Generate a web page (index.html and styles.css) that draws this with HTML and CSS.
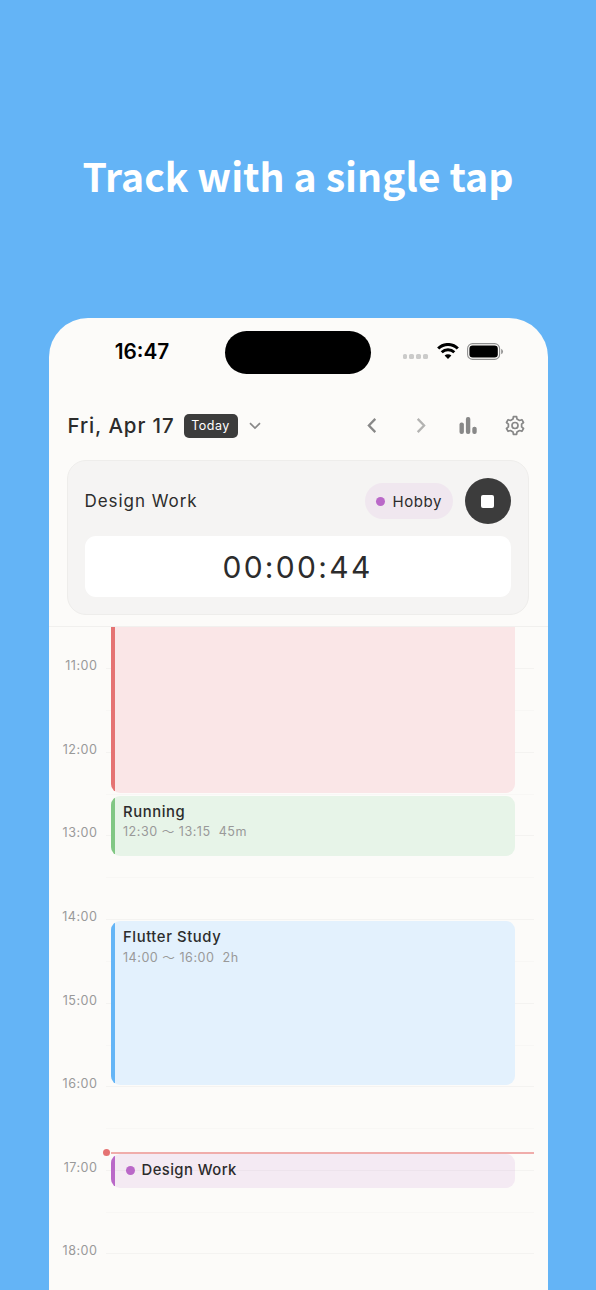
FILE: index.html
```html
<!DOCTYPE html>
<html lang="en">
<head>
  <meta charset="UTF-8">
  <title>Time Tracker</title>
  <meta name="viewport" content="width=device-width, initial-scale=1.0">
  <link rel="stylesheet" href="styles.css">
</head>
<body>
  <h1>Track with a single tap</h1>

  <div class="phone">
    <div class="status-bar">
      <div class="clock">16:47</div>
      <div class="island"></div>
      <div class="status-icons">
        <div class="signal"><i></i><i></i><i></i><i></i></div>
        <svg class="wifi" width="22" height="17" viewBox="0 0 22 17">
          <path d="M1.2 5.5 A14 14 0 0 1 20.8 5.5" fill="none" stroke="#000" stroke-width="3.1"/>
          <path d="M4.7 9.3 A9 9 0 0 1 17.3 9.3" fill="none" stroke="#000" stroke-width="2.9"/>
          <path d="M7.6 12.6 A4.9 4.9 0 0 1 14.4 12.6 L11 16 Z"/>
        </svg>
        <svg class="battery" width="37" height="17" viewBox="0 0 37 17">
          <rect x="0.6" y="0.6" width="32" height="15.8" rx="5" fill="none" stroke="#8f8f8f" stroke-width="1.1"/>
          <rect x="2.4" y="2.4" width="28.4" height="12.2" rx="3.3"/>
          <path d="M34.2 5.7 Q36 6.6 36 8.5 Q36 10.4 34.2 11.3 Z" fill="#8f8f8f"/>
        </svg>
      </div>
    </div>

    <div class="toolbar">
      <span class="date">Fri, Apr 17</span>
      <span class="today">Today</span>
      <svg class="chevron" width="12" height="8" viewBox="0 0 12 8"><path d="M1 1.2 L6 6 L11 1.2"/></svg>
      <div class="actions">
        <svg width="24" height="24" viewBox="0 0 24 24"><path class="arrow" d="M15.3 4.9 L8.9 11.5 L15.3 18.1"/></svg>
        <svg width="24" height="24" viewBox="0 0 24 24"><path class="arrow off" d="M9.7 4.9 L16.1 11.5 L9.7 18.1"/></svg>
        <svg width="24" height="24" viewBox="0 0 24 24" fill="#888">
          <rect x="4.5" y="8.4" width="4.4" height="11.6" rx="2"/>
          <rect x="10.9" y="3.1" width="4.4" height="16.9" rx="2"/>
          <rect x="17.3" y="12.7" width="4.4" height="7.3" rx="2"/>
        </svg>
        <svg width="24" height="24" viewBox="0 0 24 24">
          <g transform="translate(0 -0.5)">
            <path class="gear" d="M10 5.6 L10.4 3.1 H13.6 L14 5.6 L16.5 7 L18.9 6.2 L20.5 9 L18.6 10.6 V13.4 L20.5 15 L18.9 17.8 L16.5 17 L14 18.4 L13.6 20.9 H10.4 L10 18.4 L7.5 17 L5.1 17.8 L3.5 15 L5.4 13.4 V10.6 L3.5 9 L5.1 6.2 L7.5 7 Z"/>
            <circle class="gear" cx="12" cy="12" r="3"/>
          </g>
        </svg>
      </div>
    </div>

    <div class="tracker">
      <div class="tracker-row">
        <span class="task">Design Work</span>
        <span class="tag"><i class="dot"></i>Hobby</span>
        <button class="stop" aria-label="Stop"><i></i></button>
      </div>
      <div class="timer">00:00:44</div>
    </div>

    <div class="timeline">
      <div class="hour"><span>11:00</span></div>
      <div class="hour"><span>12:00</span></div>
      <div class="hour"><span>13:00</span></div>
      <div class="hour"><span>14:00</span></div>
      <div class="hour"><span>15:00</span></div>
      <div class="hour"><span>16:00</span></div>
      <div class="hour"><span>17:00</span></div>
      <div class="hour"><span>18:00</span></div>

      <div class="event red"></div>
      <div class="event green">
        <div class="name">Running</div>
        <div class="time">12:30 <b>〜</b> 13:15&nbsp; 45m</div>
      </div>
      <div class="event blue">
        <div class="name">Flutter Study</div>
        <div class="time">14:00 <b>〜</b> 16:00&nbsp; 2h</div>
      </div>
      <div class="event purple">
        <div class="name"><i class="dot"></i>Design Work</div>
      </div>
      <div class="now"></div>
    </div>
  </div>
</body>
</html>
```

FILE: styles.css
```css
* {
  box-sizing: border-box;
}

body {
  margin: 0;
  height: 1290px;
  overflow: hidden;
  background: #64b4f6;
  font-family: Inter, "Noto Sans CJK JP", sans-serif;
  color: #2c2c2c;
}

h1 {
  margin: 0;
  padding-top: 145px;
  height: 318px;
  font-family: "Noto Sans CJK JP", sans-serif;
  font-size: 39.2px;
  line-height: 60px;
  font-weight: 700;
  text-align: center;
  color: #fff;
  white-space: nowrap;
}

.phone {
  display: flex;
  flex-direction: column;
  width: 499px;
  height: 972px;
  margin: 0 auto;
  background: #fcfbf9;
  border-radius: 39px 39px 0 0;
  overflow: hidden;
}

.status-bar {
  display: grid;
  grid-template-columns: 176px 146px 1fr;
  padding-top: 13px;
  height: 84px;
}

.clock {
  padding: 7px 0 0 11px;
  font-size: 20.8px;
  line-height: 27px;
  font-weight: 600;
  text-align: center;
  color: #000;
}

.island {
  height: 43px;
  border-radius: 22px;
  background: #000;
}

.status-icons {
  display: flex;
  align-items: center;
  height: 40px;
  padding-left: 32px;
}

.signal {
  display: flex;
  gap: 2.6px;
  padding-top: 11px;
}

.signal i {
  width: 4.4px;
  height: 4.4px;
  border-radius: 1.6px;
  background: #cbcbca;
}

.wifi {
  margin-left: 9px;
}

.battery {
  margin-left: 8.5px;
}

.toolbar {
  display: flex;
  align-items: center;
  height: 47px;
  padding: 0 21px 0 19px;
}

.date {
  width: 116px;
  font-size: 20.5px;
  font-weight: 500;
  letter-spacing: 0.9px;
  white-space: nowrap;
}

.today {
  width: 54px;
  height: 24px;
  border-radius: 5px;
  background: #3c3c3c;
  color: #fff;
  font-size: 12.5px;
  line-height: 24px;
  letter-spacing: 0.5px;
  text-align: center;
}

.chevron {
  margin-left: 11px;
}

.chevron path {
  fill: none;
  stroke: #888;
  stroke-width: 1.7;
}

.actions {
  display: flex;
  gap: 23.5px;
  margin-left: auto;
}

.arrow {
  fill: none;
  stroke: #888;
  stroke-width: 2.3;
}

.arrow.off {
  stroke: #b3b3b2;
}

.gear {
  fill: none;
  stroke: #888;
  stroke-width: 1.7;
  stroke-linejoin: round;
}

.tracker {
  width: 462px;
  height: 155px;
  margin: 11px 0 0 18px;
  padding: 17px 17px 0;
  border: 1px solid #eeedeb;
  border-radius: 19px;
  background: #f5f4f3;
}

.tracker-row {
  display: flex;
  align-items: center;
  height: 46px;
}

.task {
  flex: 1;
  font-size: 17px;
  letter-spacing: 0.95px;
}

.dot {
  width: 9px;
  height: 9px;
  border-radius: 50%;
  background: #ba68c8;
}

.tag {
  display: flex;
  align-items: center;
  gap: 7.5px;
  width: 88px;
  height: 36px;
  padding-left: 11.5px;
  border-radius: 18px;
  background: #f0e7ef;
  font-size: 15px;
  letter-spacing: 0.55px;
}

.stop {
  display: flex;
  align-items: center;
  justify-content: center;
  width: 46px;
  height: 46px;
  margin-left: 12px;
  padding: 0;
  border: none;
  border-radius: 50%;
  background: #3c3c3c;
}

.stop i {
  width: 13px;
  height: 13px;
  border-radius: 2px;
  background: #fff;
}

.timer {
  height: 61px;
  margin-top: 12px;
  border-radius: 11px;
  background: #fff;
  font-size: 30px;
  line-height: 62px;
  letter-spacing: 2.3px;
  text-align: center;
}

/* 83.57px per hour, first visible line is 11:00 */
.timeline {
  position: relative;
  flex: 1;
  margin-top: 11px;
  padding: 41.3px 14px 0 0;
  border-top: 1px solid #f1f0ee;
  overflow: hidden;
}

.hour {
  display: grid;
  grid-template-columns: 49px 1fr;
  column-gap: 8px;
  height: 83.57px;
  background: linear-gradient(#f4f3f1, #f4f3f1) 57px 0 / 100% 1px no-repeat,
    linear-gradient(#f8f7f5, #f8f7f5) 57px 42px / 100% 1px no-repeat;
}

.hour span {
  margin-top: -10px;
  font-size: 12.6px;
  line-height: 16px;
  letter-spacing: 0.5px;
  text-align: right;
  color: #999;
}

.event {
  position: absolute;
  left: 62px;
  width: 404px;
  padding: 7px 0 0 12.5px;
  border-radius: 9px;
  overflow: hidden;
}

.event::before {
  content: "";
  position: absolute;
  left: 0;
  top: 0;
  bottom: 0;
  width: 4px;
}

.event .name {
  display: flex;
  align-items: center;
  font-size: 14.8px;
  line-height: 19px;
  font-weight: 500;
  letter-spacing: 0.6px;
}

.event .time {
  margin-top: 1.5px;
  font-size: 12.6px;
  line-height: 17px;
  letter-spacing: 0.5px;
  color: #999;
}

.event .time b {
  font-weight: 400;
}

.red {
  top: -20px;
  height: 185.5px;
  background: #fae6e7;
}

.red::before {
  background: #e57373;
}

.green {
  top: 168.5px;
  height: 60px;
  background: #e7f4e8;
}

.green::before {
  background: #81c784;
}

.blue {
  top: 294px;
  height: 164px;
  background: #e3f1fd;
}

.blue::before {
  background: #64b5f6;
}

.purple {
  top: 527px;
  height: 34px;
  padding: 7px 0 0 15px;
  background: rgba(186, 104, 200, 0.11);
}

.purple::before {
  background: #ba68c8;
}

.purple .name {
  letter-spacing: 0.45px;
}

.purple .dot {
  margin-right: 7px;
}

.now {
  position: absolute;
  left: 62px;
  right: 14px;
  top: 525px;
  height: 1.5px;
  background: #f0adab;
}

.now::before {
  content: "";
  position: absolute;
  left: -8px;
  top: -3px;
  width: 7px;
  height: 7px;
  border-radius: 50%;
  background: #e57373;
}
```
